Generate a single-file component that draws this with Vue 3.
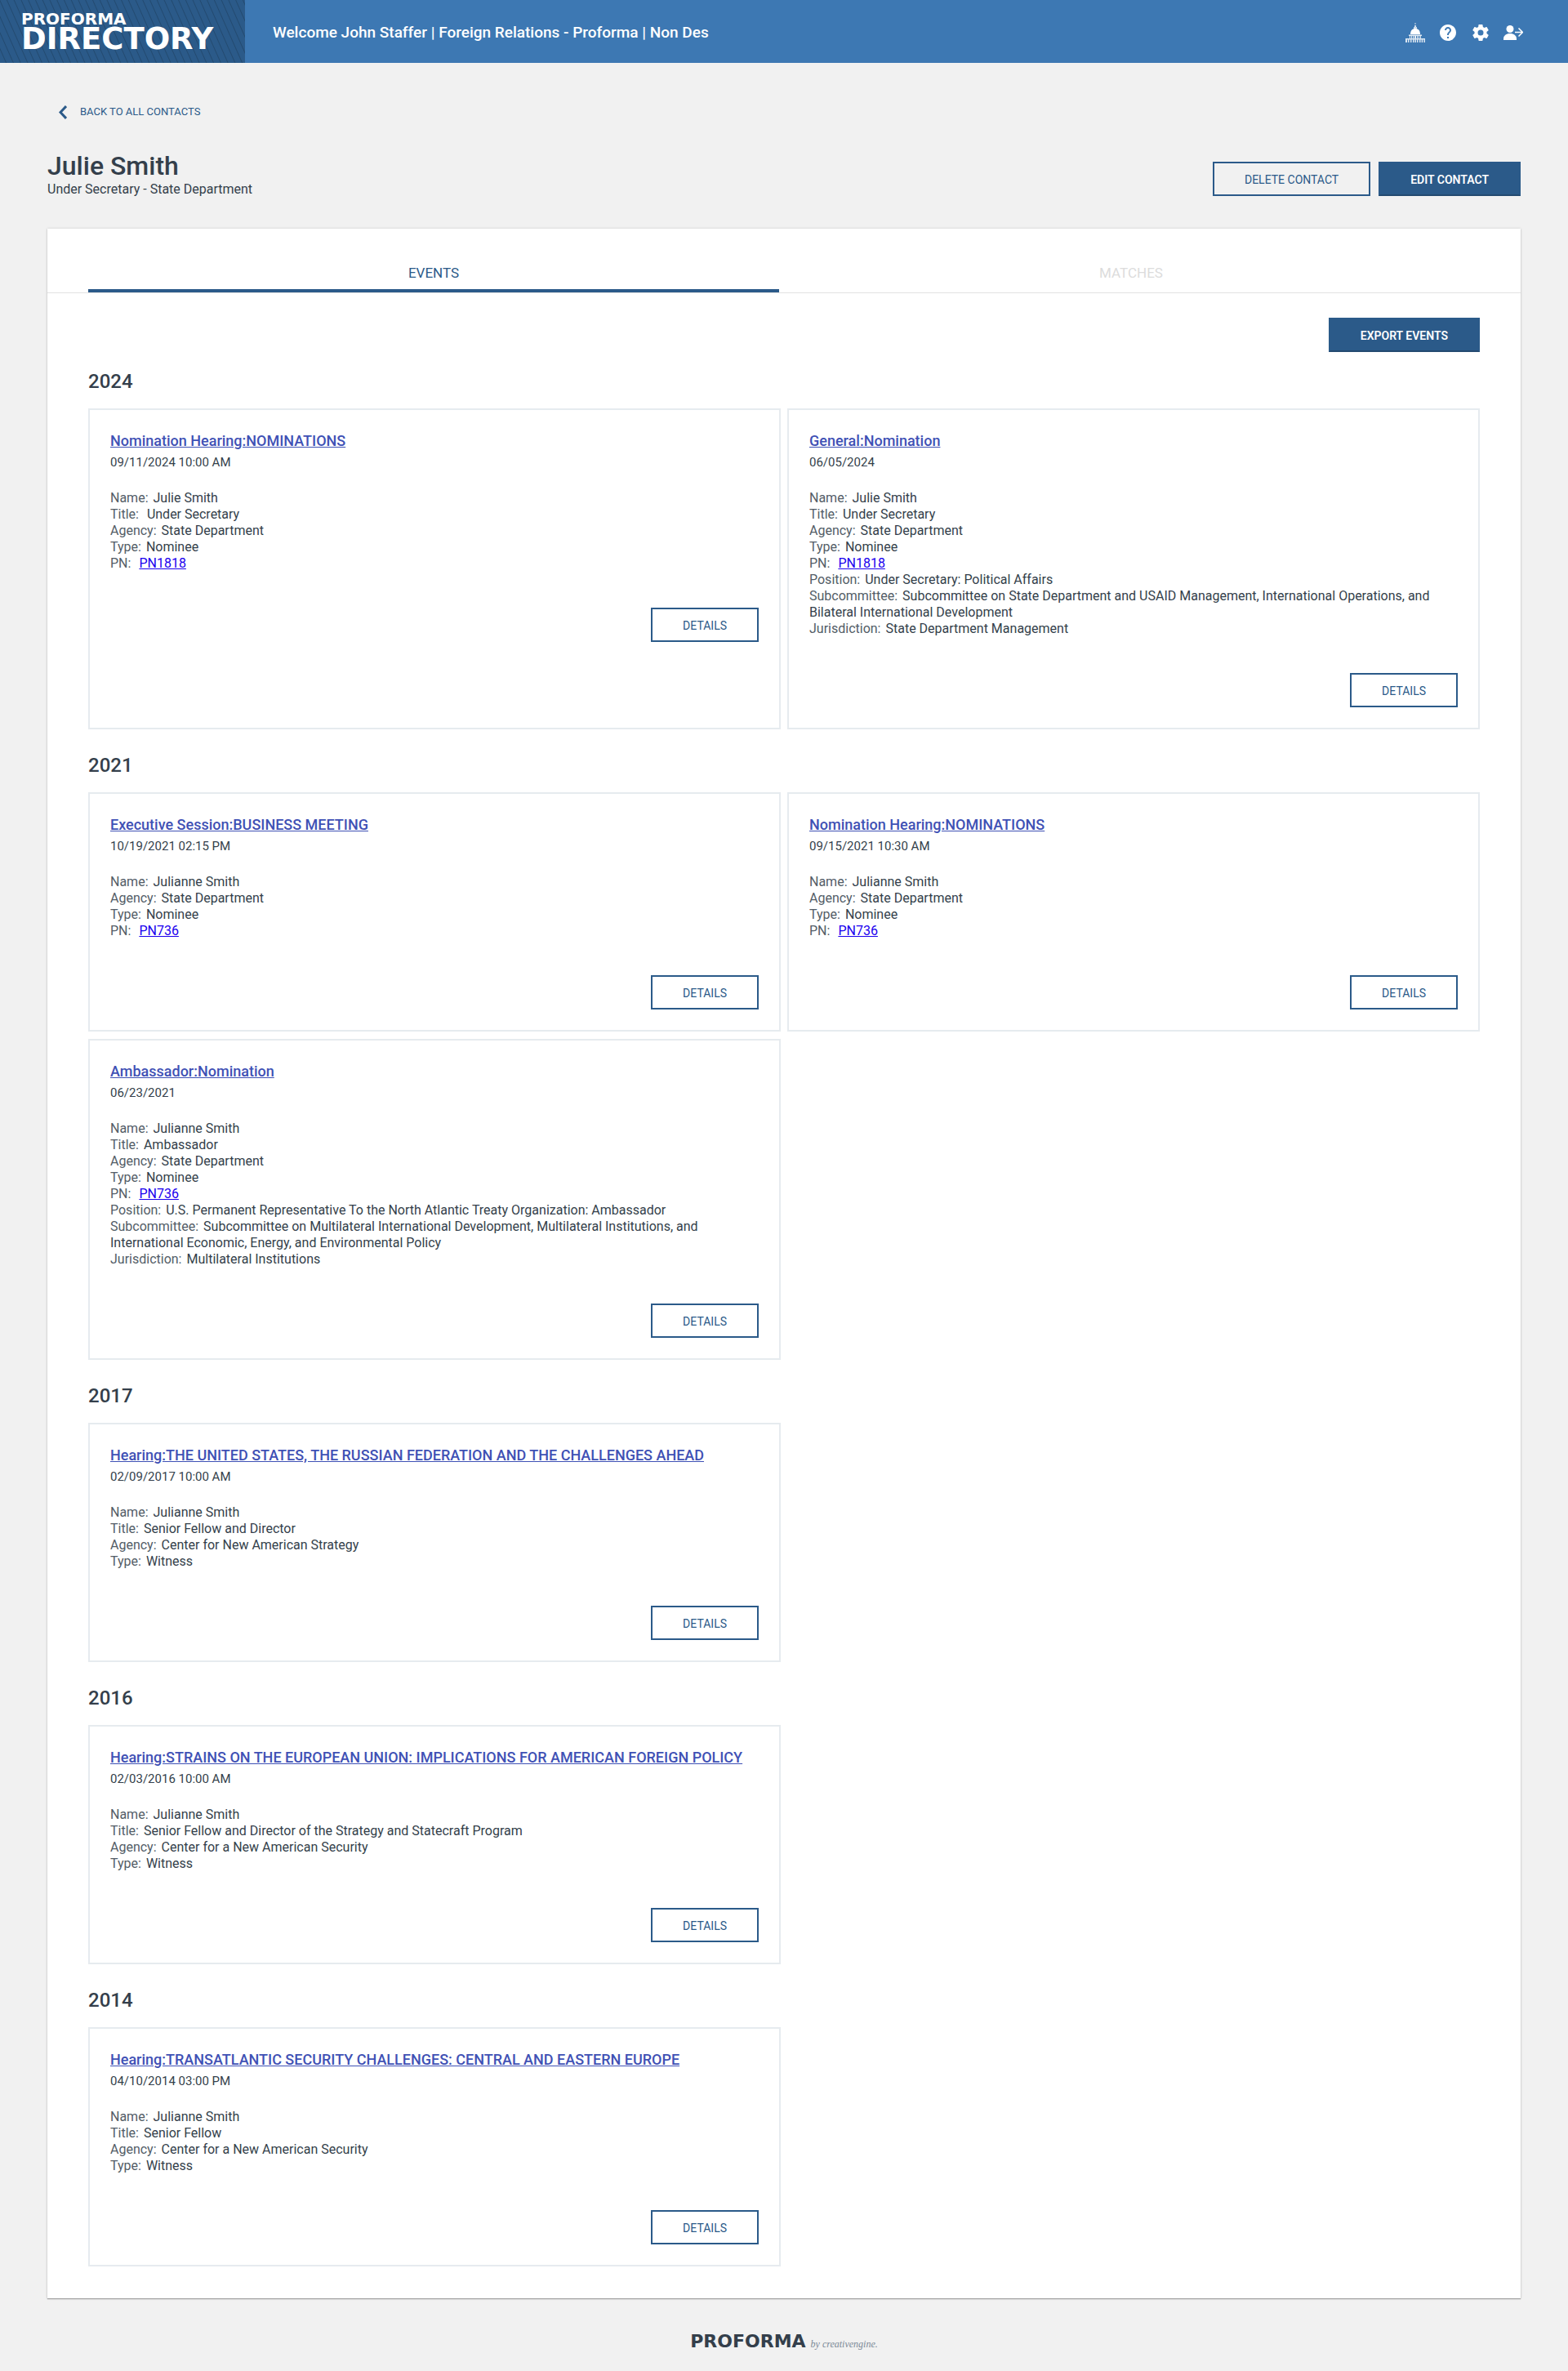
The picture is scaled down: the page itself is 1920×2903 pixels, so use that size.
<template>
  <div class="page">
    <header class="top-bar">
      <a href="#" class="logo">
        <span class="logo-small">PROFORMA</span>
        <span class="logo-big">DIRECTORY</span>
      </a>
      <p class="welcome">Welcome John Staffer | Foreign Relations - Proforma | Non Des</p>
      <nav class="top-nav">
        <a href="#" aria-label="Congress">
          <svg viewBox="0 0 24 24" width="24" height="24">
            <path d="M11.5 0h1v2h-1zM11 3h2v2h1v2h-4V5h1z" opacity=".75" />
            <path d="M6 14c0-4.400 2.300-7 6-7s6 2.600 6 7z" />
            <path d="M4 14.500h16V16H4zM5 16h1v3H5zM7 16h1v3H7zM9 16h1v3H9zM11 16h2v3h-2zM14 16h1v3h-1zM16 16h1v3h-1zM18 16h1v3h-1z" opacity=".85" />
            <path d="M0 19h24v1.500H0zM0 20h2v4H0zM3 20h1.500v4H3zM6 20h1.500v4H6zM9 20h1.500v4H9zM11.500 20H13v4h-1.500zM14 20h1.500v4H14zM17 20h1.500v4H17zM19.700 20h1.500v4h-1.500zM22.500 20H24v4h-1.500z" opacity=".8" />
          </svg>
        </a>
        <a href="#" aria-label="Help">
          <svg viewBox="0 0 24 24" width="24" height="24">
            <path d="M12 2C6.480 2 2 6.480 2 12s4.480 10 10 10 10-4.480 10-10S17.520 2 12 2zm1 17h-2v-2h2v2zm2.070-7.750l-.9.920C13.450 12.900 13 13.500 13 15h-2v-.5c0-1.100.45-2.100 1.170-2.830l1.240-1.260c.37-.36.590-.86.590-1.410 0-1.100-.9-2-2-2s-2 .9-2 2H8c0-2.210 1.790-4 4-4s4 1.790 4 4c0 .88-.36 1.680-.93 2.250z" />
          </svg>
        </a>
        <a href="#" aria-label="Settings">
          <svg viewBox="0 0 24 24" width="24" height="24">
            <path d="M12 15.500A3.500 3.500 0 0 1 8.500 12 3.500 3.500 0 0 1 12 8.500a3.500 3.500 0 0 1 3.500 3.500 3.500 3.500 0 0 1-3.500 3.500m7.430-2.530c.04-.32.070-.64.070-.97 0-.33-.03-.66-.07-1l2.110-1.630c.19-.15.240-.42.120-.64l-2-3.460c-.12-.22-.39-.31-.61-.22l-2.490 1c-.52-.39-1.060-.73-1.690-.98l-.37-2.650A.506.506 0 0 0 14 2h-4c-.25 0-.46.180-.5.420l-.37 2.650c-.63.250-1.170.590-1.690.98l-2.490-1c-.22-.09-.49 0-.61.220l-2 3.460c-.13.220-.07.490.12.640L4.570 11c-.04.340-.07.670-.07 1 0 .33.030.65.070.97l-2.110 1.660c-.19.150-.25.420-.12.640l2 3.460c.12.220.39.300.61.220l2.490-1.010c.52.400 1.060.740 1.690.99l.37 2.650c.04.240.25.420.5.420h4c.25 0 .46-.18.500-.42l.37-2.650c.63-.26 1.170-.59 1.690-.99l2.490 1.010c.22.080.49 0 .61-.22l2-3.460c.12-.22.070-.49-.12-.64l-2.110-1.660z" />
          </svg>
        </a>
        <a href="#" aria-label="Log out">
          <svg viewBox="0 0 24 24" width="24" height="24">
            <circle cx="8" cy="7.500" r="4.500" />
            <path d="M0 21v-1.500C0 15.500 3.500 13 8 13s8 2.500 8 6.500V21z" />
            <path d="M14 11.500h8.500M18.500 6.500l5 5-5 5" class="line" />
          </svg>
        </a>
      </nav>
    </header>

    <main class="content">
      <a href="#" class="back-link">
        <svg viewBox="0 0 10 17" width="10" height="17"><path d="M9 1L2 8.500l7 7.500" /></svg>
        <span>BACK TO ALL CONTACTS</span>
      </a>

      <div class="contact-header">
        <div>
          <h1>Julie Smith</h1>
          <p>Under Secretary - State Department</p>
        </div>
        <div class="contact-actions">
          <button type="button" class="btn btn-outline">DELETE CONTACT</button>
          <button type="button" class="btn btn-primary">EDIT CONTACT</button>
        </div>
      </div>

      <section class="panel">
        <div class="tabs" role="tablist">
          <button
            v-for="tab in tabs"
            :key="tab"
            type="button"
            role="tab"
            class="tab"
            :class="{ active: tab === activeTab }"
            :aria-selected="tab === activeTab"
            @click="activeTab = tab"
          >
            {{ tab }}
          </button>
        </div>

        <div class="panel-body">
          <div class="export-row">
            <button type="button" class="btn btn-primary">EXPORT EVENTS</button>
          </div>

          <section v-for="group in groups" :key="group.year" class="year-group">
            <h2>{{ group.year }}</h2>
            <div class="cards">
              <article v-for="event in group.events" :key="event.title" class="card">
                <h3><a href="#">{{ event.title }}</a></h3>
                <p class="date">{{ event.date }}</p>
                <ul class="fields">
                  <li v-for="[label, value] in event.fields" :key="label">
                    <span class="label">{{ label }}:</span>
                    <a v-if="label === 'PN'" href="#" class="pn">{{ value }}</a>
                    <span v-else>{{ value }}</span>
                  </li>
                </ul>
                <button type="button" class="btn btn-outline">DETAILS</button>
              </article>
            </div>
          </section>
        </div>
      </section>
    </main>

    <footer class="footer">
      <span class="footer-logo">PROFORMA</span>
      <span class="footer-by">by creativengine.</span>
    </footer>
  </div>
</template>

<script setup>
import { ref } from 'vue';

const tabs = ['EVENTS', 'MATCHES'];
const activeTab = ref('EVENTS');

const groups = [
  {
    year: 2024,
    events: [
      {
        title: 'Nomination Hearing:NOMINATIONS',
        date: '09/11/2024 10:00 AM',
        fields: [
          ['Name', 'Julie Smith'],
          ['Title', '\u00a0Under Secretary'],
          ['Agency', 'State Department'],
          ['Type', 'Nominee'],
          ['PN', 'PN1818']
        ]
      },
      {
        title: 'General:Nomination',
        date: '06/05/2024',
        fields: [
          ['Name', 'Julie Smith'],
          ['Title', 'Under Secretary'],
          ['Agency', 'State Department'],
          ['Type', 'Nominee'],
          ['PN', 'PN1818'],
          ['Position', 'Under Secretary: Political Affairs'],
          ['Subcommittee', 'Subcommittee on State Department and USAID Management, International Operations, and Bilateral International Development'],
          ['Jurisdiction', 'State Department Management']
        ]
      }
    ]
  },
  {
    year: 2021,
    events: [
      {
        title: 'Executive Session:BUSINESS MEETING',
        date: '10/19/2021 02:15 PM',
        fields: [
          ['Name', 'Julianne Smith'],
          ['Agency', 'State Department'],
          ['Type', 'Nominee'],
          ['PN', 'PN736']
        ]
      },
      {
        title: 'Nomination Hearing:NOMINATIONS',
        date: '09/15/2021 10:30 AM',
        fields: [
          ['Name', 'Julianne Smith'],
          ['Agency', 'State Department'],
          ['Type', 'Nominee'],
          ['PN', 'PN736']
        ]
      },
      {
        title: 'Ambassador:Nomination',
        date: '06/23/2021',
        fields: [
          ['Name', 'Julianne Smith'],
          ['Title', 'Ambassador'],
          ['Agency', 'State Department'],
          ['Type', 'Nominee'],
          ['PN', 'PN736'],
          ['Position', 'U.S. Permanent Representative To the North Atlantic Treaty Organization: Ambassador'],
          ['Subcommittee', 'Subcommittee on Multilateral International Development, Multilateral Institutions, and International Economic, Energy, and Environmental Policy'],
          ['Jurisdiction', 'Multilateral Institutions']
        ]
      }
    ]
  },
  {
    year: 2017,
    events: [
      {
        title: 'Hearing:THE UNITED STATES, THE RUSSIAN FEDERATION AND THE CHALLENGES AHEAD',
        date: '02/09/2017 10:00 AM',
        fields: [
          ['Name', 'Julianne Smith'],
          ['Title', 'Senior Fellow and Director'],
          ['Agency', 'Center for New American Strategy'],
          ['Type', 'Witness']
        ]
      }
    ]
  },
  {
    year: 2016,
    events: [
      {
        title: 'Hearing:STRAINS ON THE EUROPEAN UNION: IMPLICATIONS FOR AMERICAN FOREIGN POLICY',
        date: '02/03/2016 10:00 AM',
        fields: [
          ['Name', 'Julianne Smith'],
          ['Title', 'Senior Fellow and Director of the Strategy and Statecraft Program'],
          ['Agency', 'Center for a New American Security'],
          ['Type', 'Witness']
        ]
      }
    ]
  },
  {
    year: 2014,
    events: [
      {
        title: 'Hearing:TRANSATLANTIC SECURITY CHALLENGES: CENTRAL AND EASTERN EUROPE',
        date: '04/10/2014 03:00 PM',
        fields: [
          ['Name', 'Julianne Smith'],
          ['Title', 'Senior Fellow'],
          ['Agency', 'Center for a New American Security'],
          ['Type', 'Witness']
        ]
      }
    ]
  }
];
</script>

<style>
html,
body {
  margin: 0;
  background: #f1f1f1;
}
</style>

<style scoped>
.page {
  font-family: Roboto, "Liberation Sans", sans-serif;
  font-size: 16px;
  line-height: 20px;
  color: #343f4b;
}

h1,
h2,
h3,
p,
ul {
  margin: 0;
  padding: 0;
}

h1,
h2,
h3 {
  font-weight: 500;
}

/* Header */
.top-bar {
  display: flex;
  align-items: center;
  height: 77px;
  background: #3d78b3;
  color: #fff;
}

.logo {
  box-sizing: border-box;
  display: flex;
  flex-direction: column;
  justify-content: center;
  width: 300px;
  height: 77px;
  padding-left: 26px;
  background: repeating-linear-gradient(66deg, #2b5a89 0, #2b5a89 6px, #234a70 7px, #2b5a89 8px);
  color: #fff;
  font-family: "DejaVu Sans", sans-serif;
  font-weight: 700;
  text-decoration: none;
}

.logo-small {
  font-size: 20px;
  line-height: 18px;
}

.logo-big {
  font-size: 37px;
  line-height: 32px;
}

.welcome {
  flex: 1;
  padding: 2px 0 0 34px;
  font-size: 19px;
  font-weight: 500;
  line-height: 24px;
}

.top-nav {
  display: flex;
  gap: 16px;
  padding: 2px 55px 0 0;
}

.top-nav a {
  height: 24px;
  color: #fff;
}

.top-nav svg {
  display: block;
  fill: currentColor;
}

.top-nav .line {
  fill: none;
  stroke: currentColor;
  stroke-width: 1.5;
}

/* Contact heading */
.content {
  padding: 0 58px;
}

.back-link {
  display: inline-flex;
  align-items: center;
  gap: 16px;
  margin: 50px 0 0 14px;
  color: #2b5a89;
  font-size: 13px;
  text-decoration: none;
}

.back-link svg {
  fill: none;
  stroke: currentColor;
  stroke-width: 3;
}

.contact-header {
  display: flex;
  justify-content: space-between;
  align-items: flex-end;
  margin-top: 33px;
  padding-bottom: 38px;
}

h1 {
  font-size: 32px;
  line-height: 38px;
}

.contact-actions {
  display: flex;
  gap: 10px;
  padding-bottom: 2px;
}

/* Buttons */
.btn {
  box-sizing: border-box;
  height: 42px;
  padding: 2px 37px 0;
  border: 2px solid #2b5a89;
  font-family: inherit;
  font-size: 14px;
  cursor: pointer;
}

.btn-outline {
  background: transparent;
  color: #2b5a89;
}

.btn-primary {
  border-bottom-color: #244a70;
  background: #2b5a89;
  color: #fff;
  font-weight: 600;
}

/* Panel */
.panel {
  background: #fff;
  box-shadow: 0 1px 1px rgba(0, 0, 0, 0.3), 0 0 3px rgba(0, 0, 0, 0.15);
}

.tabs {
  display: grid;
  grid-template-columns: 1fr 1fr;
  gap: 8px;
  padding: 30px 54px 0 50px;
  border-bottom: 1px solid #e2e2e2;
}

.tab {
  height: 48px;
  padding: 4px 0 0;
  border: 0;
  border-bottom: 4px solid transparent;
  background: none;
  color: #dcdcdc;
  font-family: inherit;
  font-size: 17px;
  cursor: pointer;
}

.tab.active {
  border-color: #2b5a89;
  color: #2b5a89;
}

.panel-body {
  padding: 30px 50px 39px;
}

.export-row {
  display: flex;
  justify-content: flex-end;
  margin-bottom: 21px;
}

.year-group + .year-group {
  margin-top: 29px;
}

h2 {
  margin-bottom: 18px;
  font-size: 24px;
  line-height: 30px;
}

.cards {
  display: grid;
  grid-template-columns: 1fr 1fr;
  gap: 9px 8px;
}

.card {
  display: flex;
  flex-direction: column;
  align-items: flex-start;
  padding: 26px 25px 25px;
  border: 2px solid #e6ebef;
}

h3 {
  font-size: 18px;
  line-height: 24px;
}

h3 a {
  color: #3f51b5;
}

.date {
  margin: 4px 0 24px;
  font-size: 15px;
}

.fields {
  list-style: none;
}

.label {
  margin-right: 6px;
  color: #535d67;
}

.pn {
  margin-left: 4px;
  color: #1a00ee;
}

.card .btn {
  align-self: flex-end;
  margin-top: 44px;
}

/* Footer */
.footer {
  display: flex;
  justify-content: center;
  align-items: baseline;
  gap: 6px;
  padding: 41px 0 23px;
}

.footer-logo {
  font-family: "DejaVu Sans", sans-serif;
  font-size: 22px;
  font-weight: 700;
  line-height: 24px;
}

.footer-by {
  color: #7c8a97;
  font-family: "Liberation Serif", serif;
  font-size: 12px;
  font-style: italic;
}
</style>
